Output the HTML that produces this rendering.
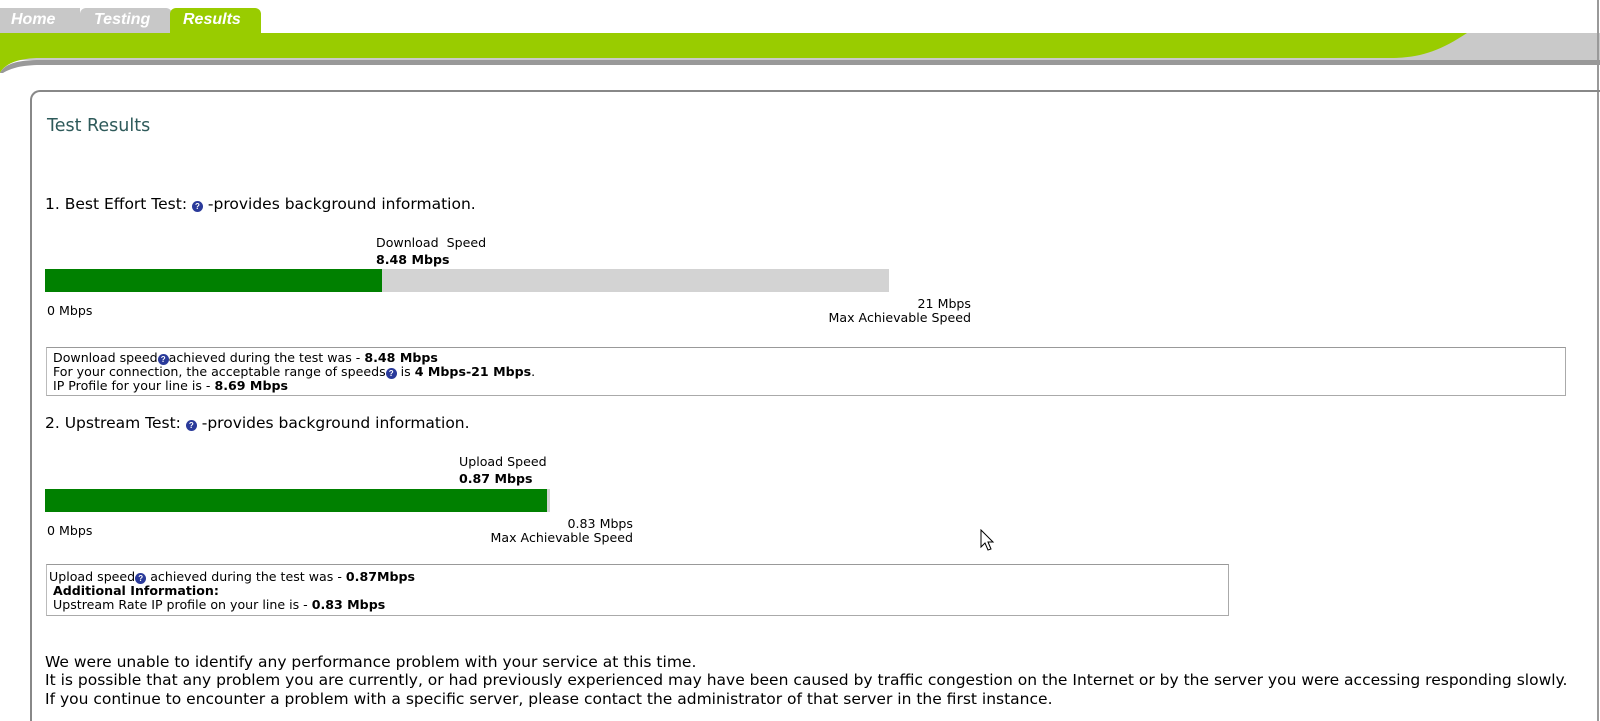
<!DOCTYPE html>
<html><head><meta charset="utf-8"><style>
*{margin:0;padding:0;box-sizing:border-box}
html,body{width:1600px;height:721px;overflow:hidden}
body{background:#fff;position:relative;font-family:"DejaVu Sans","Liberation Sans",sans-serif;color:#000}
.a{position:absolute;white-space:nowrap}
.tab{position:absolute;top:8px;height:25px;font:italic bold 16px "Liberation Sans",sans-serif;color:#fff;padding-top:3px}
.s{font-size:12.6px;line-height:13.6px}
.m{font-size:15.5px}
.q{display:inline-block;width:11px;height:11px;border-radius:50%;background:#2a3a9a;color:#fff;font:bold 8px/11px sans-serif;text-align:center;vertical-align:0px}
.box{position:absolute;border:1px solid #aaa;border-left-color:#bbb;border-top-color:#999}
</style></head><body>
<div class="tab" style="left:0;width:80px;background:#c8c8c8;padding-left:11px">Home</div>
<div class="tab" style="left:80px;width:92px;background:#c8c8c8;border-radius:6px 6px 0 0;padding-left:14px">Testing</div>
<div class="tab" style="left:170px;width:91px;background:#99cc00;border-radius:6px 6px 0 0;padding-left:13px">Results</div>
<svg class="a" style="left:0;top:33px" width="1600" height="40">
<rect x="0" y="0" width="1600" height="27" fill="#c9c9c9"/>
<path d="M0 0 H1467 C1440 18 1420 25 1390 25 H40 C20 25 5 30 0 40 Z" fill="#99cc00"/>
<path d="M0 40 C5 30 20 27 40 27 H1600 V32 H40 C20 32 8 36 0 42 Z" fill="#999"/>
</svg>
<div class="a" style="left:1597px;top:0;width:2px;height:721px;background:#999"></div>
<div class="a" style="left:30px;top:90px;width:1580px;height:640px;border:2px solid #888;border-right:none;border-bottom:none;border-radius:10px 0 0 0"></div>
<div class="a" style="left:47px;top:116px;font-size:17.5px;color:#2e5a5a">Test Results</div>
<div class="a m" style="left:45px;top:195px">1. Best Effort Test: <span class="q">?</span> -provides background information.</div>
<div class="a s" style="left:376px;top:236px">Download&nbsp; Speed</div>
<div class="a s" style="left:376px;top:253px;font-weight:bold">8.48 Mbps</div>
<div class="a" style="left:45px;top:269px;width:844px;height:23px;background:#d3d3d3"></div>
<div class="a" style="left:45px;top:269px;width:337px;height:23px;background:#008000"></div>
<div class="a s" style="left:47px;top:304px">0 Mbps</div>
<div class="a s" style="left:671px;top:297px;width:300px;text-align:right">21 Mbps<br>Max Achievable Speed</div>
<div class="box" style="left:46px;top:347px;width:1520px;height:49px"></div>
<div class="a s" style="left:53px;top:351px">Download speed<span class="q">?</span>achieved during the test was - <b>8.48 Mbps</b><br>For your connection, the acceptable range of speeds<span class="q">?</span> is <b>4 Mbps-21 Mbps</b>.<br>IP Profile for your line is - <b>8.69 Mbps</b></div>
<div class="a m" style="left:45px;top:414px">2. Upstream Test: <span class="q">?</span> -provides background information.</div>
<div class="a s" style="left:459px;top:455px">Upload Speed</div>
<div class="a s" style="left:459px;top:472px;font-weight:bold">0.87 Mbps</div>
<div class="a" style="left:45px;top:489px;width:505px;height:23px;background:#d3d3d3"></div>
<div class="a" style="left:45px;top:489px;width:502px;height:23px;background:#008000"></div>
<div class="a s" style="left:47px;top:524px">0 Mbps</div>
<div class="a s" style="left:383px;top:517px;width:250px;text-align:right">0.83 Mbps<br>Max Achievable Speed</div>
<div class="box" style="left:46px;top:564px;width:1183px;height:52px"></div>
<div class="a s" style="left:49px;top:570px">Upload speed<span class="q">?</span> achieved during the test was - <b>0.87Mbps</b><br>&nbsp;<b>Additional Information:</b><br>&nbsp;Upstream Rate IP profile on your line is - <b>0.83 Mbps</b></div>
<div class="a m" style="left:45px;top:653px;line-height:18.4px">We were unable to identify any performance problem with your service at this time.<br>It is possible that any problem you are currently, or had previously experienced may have been caused by traffic congestion on the Internet or by the server you were accessing responding slowly.<br>If you continue to encounter a problem with a specific server, please contact the administrator of that server in the first instance.</div>
<svg class="a" style="left:980px;top:529px" width="16" height="24"><path d="M1 1 L1 18 L5 14 L8 21 L11 20 L8 13 L13 13 Z" fill="#fff" stroke="#000" stroke-width="1"/></svg>
</body></html>
